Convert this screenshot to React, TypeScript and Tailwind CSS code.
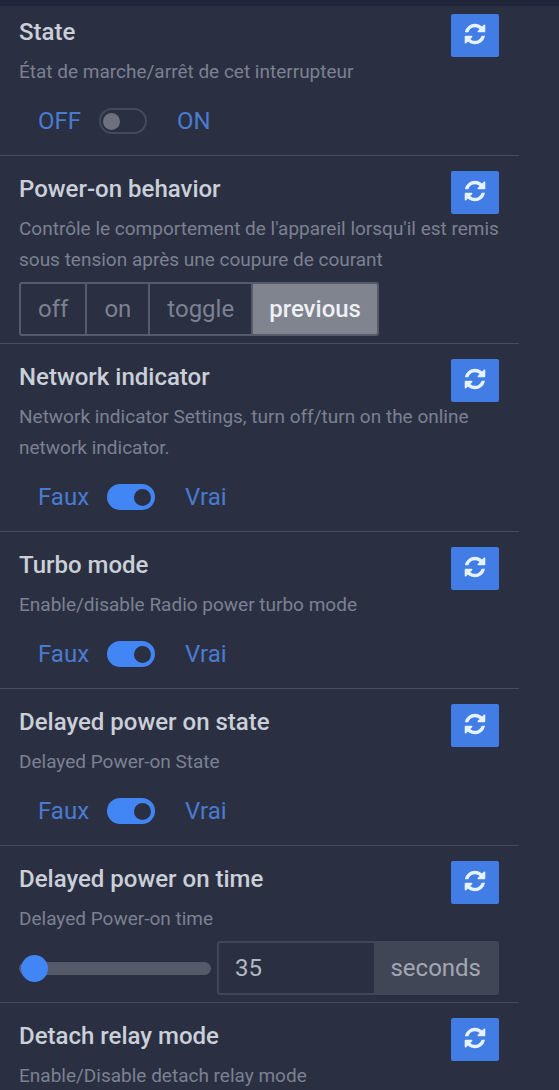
import React, { useState } from "react";

interface FeatureRowProps {
  title: string;
  description: string;
  children?: React.ReactNode;
}

const RefreshIcon: React.FC = () => (
  <svg width="24" height="24" viewBox="0 0 1792 1792" fill="currentColor" aria-hidden="true">
    <path d="M1639 1056q0 5-1 7-64 268-268 434.5t-478 166.5q-146 0-282.5-55t-243.5-157l-129 129q-19 19-45 19t-45-19-19-45v-448q0-26 19-45t45-19h448q26 0 45 19t19 45-19 45l-137 137q71 66 161 102t187 36q134 0 250-65t186-179q11-17 53-117 8-23 30-23h192q13 0 22.5 9.5t9.5 22.5zm25-800v448q0 26-19 45t-45 19h-448q-26 0-45-19t-19-45 19-45l138-138q-148-137-349-137-134 0-250 65t-186 179q-11 17-53 117-8 23-30 23h-199q-13 0-22.5-9.5t-9.5-22.5v-7q65-268 270-434.5t480-166.5q146 0 284 55.5t245 156.5l130-129q19-19 45-19t45 19 19 45z" />
  </svg>
);

const FeatureRow: React.FC<FeatureRowProps> = ({ title, description, children }) => (
  <section className="border-t border-[#454b5d] pr-5 pl-[19px] pt-[15px] first:border-t-0 first:pt-2">
    <div className="flex h-9 items-start justify-between">
      <h2 className="text-2xl leading-9 font-medium text-[#cbcfd8]">{title}</h2>
      <button
        type="button"
        aria-label={`Refresh ${title}`}
        className="flex h-[43px] w-12 shrink-0 items-center justify-center rounded-xs bg-[#427de6] pb-1 text-[#e6f3ff]"
      >
        <RefreshIcon />
      </button>
    </div>
    <p className="mt-[6px] text-[19px] leading-[31px] text-[#7c8192]">{description}</p>
    <div className="flex h-[68px] items-start pt-[7px]">{children}</div>
  </section>
);

interface ToggleProps {
  name: string;
  offLabel: string;
  onLabel: string;
  initial: boolean;
}

const Toggle: React.FC<ToggleProps> = ({ name, offLabel, onLabel, initial }) => {
  const [checked, setChecked] = useState(initial);

  return (
    <div className="flex h-[54px] items-center pl-[19px] text-2xl text-[#4a7bd0]">
      <span>{offLabel}</span>
      <input
        type="checkbox"
        aria-label={name}
        checked={checked}
        onChange={(e) => setChecked(e.target.checked)}
        className="mr-[30px] ml-[18px] flex h-[26px] w-12 appearance-none items-center rounded-full border-2 border-[#454a59] px-[2px] before:h-[17px] before:w-[17px] before:rounded-full before:bg-[#6d717e] checked:justify-end checked:border-[#4285f4] checked:bg-[#4285f4] checked:before:bg-[#2a3042]"
      />
      <span>{onLabel}</span>
    </div>
  );
};

const OPTIONS = ["off", "on", "toggle", "previous"];

const PowerOnBehavior: React.FC = () => {
  const [selected, setSelected] = useState("previous");

  return (
    <div className="flex h-[54px] divide-x-2 divide-[#555b6c] overflow-hidden rounded-[3px] border-2 border-[#555b6c]">
      {OPTIONS.map((option) => (
        <button
          key={option}
          type="button"
          onClick={() => setSelected(option)}
          className={
            selected === option
              ? "bg-[#80848f] px-4 text-2xl font-medium text-[#eef0f4]"
              : "px-[17px] text-2xl text-[#7c8192]"
          }
        >
          {option}
        </button>
      ))}
    </div>
  );
};

const DelayTime: React.FC = () => {
  const [value, setValue] = useState(35);

  return (
    <div className="flex h-[54px] w-full items-center gap-[6px]">
      <input
        type="range"
        aria-label="Delayed power on time"
        min={0}
        max={3600}
        value={value}
        onChange={(e) => setValue(Number(e.target.value))}
        className="h-[13px] w-2/5 appearance-none rounded-full bg-[#555a68] [&::-webkit-slider-thumb]:h-[27px] [&::-webkit-slider-thumb]:w-[27px] [&::-webkit-slider-thumb]:appearance-none [&::-webkit-slider-thumb]:rounded-full [&::-webkit-slider-thumb]:bg-[#4285f4]"
      />
      <div className="flex h-full min-w-0 flex-1 rounded-[3px] border-2 border-[#404656] text-2xl">
        <input
          type="text"
          inputMode="numeric"
          aria-label="Delay in seconds"
          value={value}
          onChange={(e) => setValue(Number(e.target.value) || 0)}
          className="min-w-0 flex-1 bg-transparent px-4 text-[#b3b7c2]"
        />
        <span className="flex items-center bg-[#404656] px-4 text-[#a3a7b2]">seconds</span>
      </div>
    </div>
  );
};

export default function App() {
  return (
    <div className="min-h-screen bg-[#2a3042] font-[Roboto,sans-serif]">
      <header className="h-[6px] bg-[#20263a]" />
      <main className="h-[calc(100vh-6px)] overflow-hidden pr-10">
        <FeatureRow title="State" description="État de marche/arrêt de cet interrupteur">
          <Toggle name="State" offLabel="OFF" onLabel="ON" initial={false} />
        </FeatureRow>
        <FeatureRow
          title="Power-on behavior"
          description="Contrôle le comportement de l'appareil lorsqu'il est remis sous tension après une coupure de courant"
        >
          <PowerOnBehavior />
        </FeatureRow>
        <FeatureRow
          title="Network indicator"
          description="Network indicator Settings, turn off/turn on the online network indicator."
        >
          <Toggle name="Network indicator" offLabel="Faux" onLabel="Vrai" initial={true} />
        </FeatureRow>
        <FeatureRow title="Turbo mode" description="Enable/disable Radio power turbo mode">
          <Toggle name="Turbo mode" offLabel="Faux" onLabel="Vrai" initial={true} />
        </FeatureRow>
        <FeatureRow title="Delayed power on state" description="Delayed Power-on State">
          <Toggle name="Delayed power on state" offLabel="Faux" onLabel="Vrai" initial={true} />
        </FeatureRow>
        <FeatureRow title="Delayed power on time" description="Delayed Power-on time">
          <DelayTime />
        </FeatureRow>
        <FeatureRow title="Detach relay mode" description="Enable/Disable detach relay mode" />
      </main>
    </div>
  );
}
